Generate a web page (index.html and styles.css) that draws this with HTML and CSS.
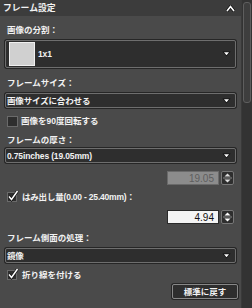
FILE: index.html
```html
<!DOCTYPE html>
<html lang="ja">
<head>
<meta charset="utf-8">
<link rel="stylesheet" href="styles.css">
</head>
<body>
<div class="app">
  <div class="panel">
    <div class="header">
      <span class="title">フレーム設定</span>
      <svg class="collapse" width="9" height="7" viewBox="0 0 9 7"><path d="M1 6 L4.5 1.5 L8 6" fill="none" stroke="#111" stroke-width="3"/><path d="M1 6 L4.5 1.5 L8 6" fill="none" stroke="#fff" stroke-width="1.6"/></svg>
    </div>
    <div class="content">
      <div class="label l1">画像の分割：</div>
      <div class="select big">
        <span class="swatch"></span>
        <span class="stext">1x1</span>
        <svg class="arrow" width="9" height="6" viewBox="0 0 9 6"><path d="M0.5 0.5 H8.5 L4.5 5.5 Z" fill="#111"/><path d="M2 1.3 H7 L4.5 4.3 Z" fill="#fff"/></svg>
      </div>
      <div class="label l2">フレームサイズ：</div>
      <div class="select small s2">
        <span class="stext">画像サイズに合わせる</span>
        <svg class="arrow" width="9" height="6" viewBox="0 0 9 6"><path d="M0.5 0.5 H8.5 L4.5 5.5 Z" fill="#111"/><path d="M2 1.3 H7 L4.5 4.3 Z" fill="#fff"/></svg>
      </div>
      <div class="check c1">
        <span class="box"></span>
        <span>画像を90度回転する</span>
      </div>
      <div class="label l3">フレームの厚さ：</div>
      <div class="select small s3">
        <span class="stext">0.75inches (19.05mm)</span>
        <svg class="arrow" width="9" height="6" viewBox="0 0 9 6"><path d="M0.5 0.5 H8.5 L4.5 5.5 Z" fill="#111"/><path d="M2 1.3 H7 L4.5 4.3 Z" fill="#fff"/></svg>
      </div>
      <div class="numrow n1">
        <div class="num disabled">19.05</div>
        <div class="spin">
          <svg width="13" height="14" viewBox="0 0 13 14"><path d="M3.5 5.5 L6.5 2.5 L9.5 5.5 Z" fill="#ddd"/><line x1="2" y1="7" x2="11" y2="7" stroke="#888" stroke-width="1"/><path d="M3.5 8.5 L6.5 11.5 L9.5 8.5 Z" fill="#ddd"/></svg>
        </div>
      </div>
      <div class="check c2">
        <svg class="cbox" width="12" height="12" viewBox="0 0 12 12"><rect x="0.5" y="2.5" width="9" height="9" fill="#2e2e2e" stroke="#6a6a6a"/><path d="M2 6.5 L4.5 9.5 L10.5 1" fill="none" stroke="#111" stroke-width="3"/><path d="M2 6.5 L4.5 9.5 L10.5 1" fill="none" stroke="#fff" stroke-width="1.5"/></svg>
        <span class="latin">はみ出し量(0.00 - 25.40mm)：</span>
      </div>
      <div class="numrow n2">
        <div class="num active">4.94</div>
        <div class="spin">
          <svg width="13" height="14" viewBox="0 0 13 14"><path d="M3.5 5.5 L6.5 2.5 L9.5 5.5 Z" fill="#fff"/><line x1="2" y1="7" x2="11" y2="7" stroke="#888" stroke-width="1"/><path d="M3.5 8.5 L6.5 11.5 L9.5 8.5 Z" fill="#fff"/></svg>
        </div>
      </div>
      <div class="label l4">フレーム側面の処理：</div>
      <div class="select small s4">
        <span class="stext">鏡像</span>
        <svg class="arrow" width="9" height="6" viewBox="0 0 9 6"><path d="M0.5 0.5 H8.5 L4.5 5.5 Z" fill="#111"/><path d="M2 1.3 H7 L4.5 4.3 Z" fill="#fff"/></svg>
      </div>
      <div class="check c3">
        <svg class="cbox" width="12" height="12" viewBox="0 0 12 12"><rect x="0.5" y="2.5" width="9" height="9" fill="#2e2e2e" stroke="#6a6a6a"/><path d="M2 6.5 L4.5 9.5 L10.5 1" fill="none" stroke="#111" stroke-width="3"/><path d="M2 6.5 L4.5 9.5 L10.5 1" fill="none" stroke="#fff" stroke-width="1.5"/></svg>
        <span>折り線を付ける</span>
      </div>
      <div class="btnrow">
        <button class="btn">標準に戻す</button>
      </div>
    </div>
  </div>
  <div class="scrollbar">
    <div class="thumb"></div>
  </div>
</div>
</body>
</html>
```
FILE: styles.css
```css
html, body {
  margin: 0;
  padding: 0;
  background: #4a4a4a;
}
body {
  width: 252px;
  height: 308px;
  overflow: hidden;
  font-family: "Liberation Sans", "Noto Sans CJK JP", sans-serif;
  font-size: 8.5px;
  font-weight: bold;
  color: #f2f2f2;
}
.app {
  display: grid;
  grid-template-columns: 241px 11px;
  height: 308px;
}
.panel {
  background: #4a4a4a;
  display: flex;
  flex-direction: column;
}
.header {
  height: 16px;
  background: #3c3c3c;
  display: flex;
  align-items: center;
  justify-content: space-between;
  padding: 0 6px 0 3px;
}
.title {
  font-size: 8.8px;
  line-height: 12px;
}
.collapse {
  margin-top: 1px;
}
.content {
  padding: 0 5px 0 5px;
  display: flex;
  flex-direction: column;
}
.label {
  height: 12px;
  line-height: 12px;
  padding-left: 2px;
}
.l1 { margin-top: 8px; }
.l2 { margin-top: 9px; }
.l3 { margin-top: 7px; }
.l4 { margin-top: 8px; }
.select {
  width: 231px;
  box-sizing: border-box;
  background: #2e2e2e;
  border: 1px solid #6e6e6e;
  border-radius: 2px;
  display: flex;
  align-items: center;
  box-shadow: 0 0 0 1px #262626;
}
.big {
  height: 28px;
  margin-top: 4px;
  padding: 0 4px 0 3px;
}
.small {
  height: 15px;
  padding: 0 4px 0 1px;
}
.s2 { margin-top: 4px; }
.s3 { margin-top: 2px; }
.s4 { margin-top: 4px; }
.swatch {
  width: 24px;
  height: 22px;
  background: #d0d0d0;
  border: 1px solid #f0f0f0;
  margin-right: 3px;
}
.stext {
  flex: 1;
  line-height: 12px;
  letter-spacing: -0.15px;
}
.arrow {
  flex: none;
}
.check {
  height: 12px;
  display: flex;
  align-items: center;
  padding-left: 2px;
  gap: 3px;
  line-height: 12px;
}
.latin {
  letter-spacing: -0.2px;
}
.c1 { margin-top: 7px; }
.c2 { margin-top: 6px; }
.c3 { margin-top: 6px; }
.box {
  width: 9px;
  height: 9px;
  background: #2e2e2e;
  border: 1px solid #6a6a6a;
}
.cbox {
  margin-top: -2px;
}
.numrow {
  display: flex;
  justify-content: flex-end;
  align-items: center;
  gap: 2px;
  padding-right: 2px;
  height: 14px;
}
.n1 { margin-top: 8px; }
.n2 { margin-top: 7px; }
.num {
  width: 52px;
  height: 14px;
  box-sizing: border-box;
  text-align: right;
  padding-right: 4px;
  line-height: 13px;
  font-size: 10px;
  font-weight: normal;
  border: 1px solid #6a6a6a;
}
.disabled {
  background: #8c8c8c;
  color: #5e5e5e;
}
.active {
  background: #f4f4f4;
  color: #111;
  border-color: #2a2a2a;
}
.spin {
  width: 13px;
  height: 14px;
  box-sizing: border-box;
  background: #2e2e2e;
  border: 1px solid #777;
  border-radius: 2px;
  display: flex;
  align-items: center;
  justify-content: center;
  overflow: hidden;
}
.spin svg {
  flex: none;
}
.btnrow {
  display: flex;
  justify-content: flex-end;
  margin-top: 3px;
  margin-right: -2px;
}
.btn {
  width: 66px;
  height: 15px;
  padding: 0;
  font-family: inherit;
  font-size: 8.5px;
  font-weight: bold;
  color: #f2f2f2;
  background: #2e2e2e;
  border: 1px solid #888;
  border-radius: 2px;
  box-shadow: 0 0 0 1px #262626;
  line-height: 12px;
}
.scrollbar {
  background: #333333;
  padding: 2px 1px 0 1px;
  border-left: 1px solid #3a3a3a;
}
.thumb {
  height: 101px;
  box-sizing: border-box;
  background: #3e3e3e;
  border: 1px solid #5e5e5e;
  border-radius: 3px;
}
```
